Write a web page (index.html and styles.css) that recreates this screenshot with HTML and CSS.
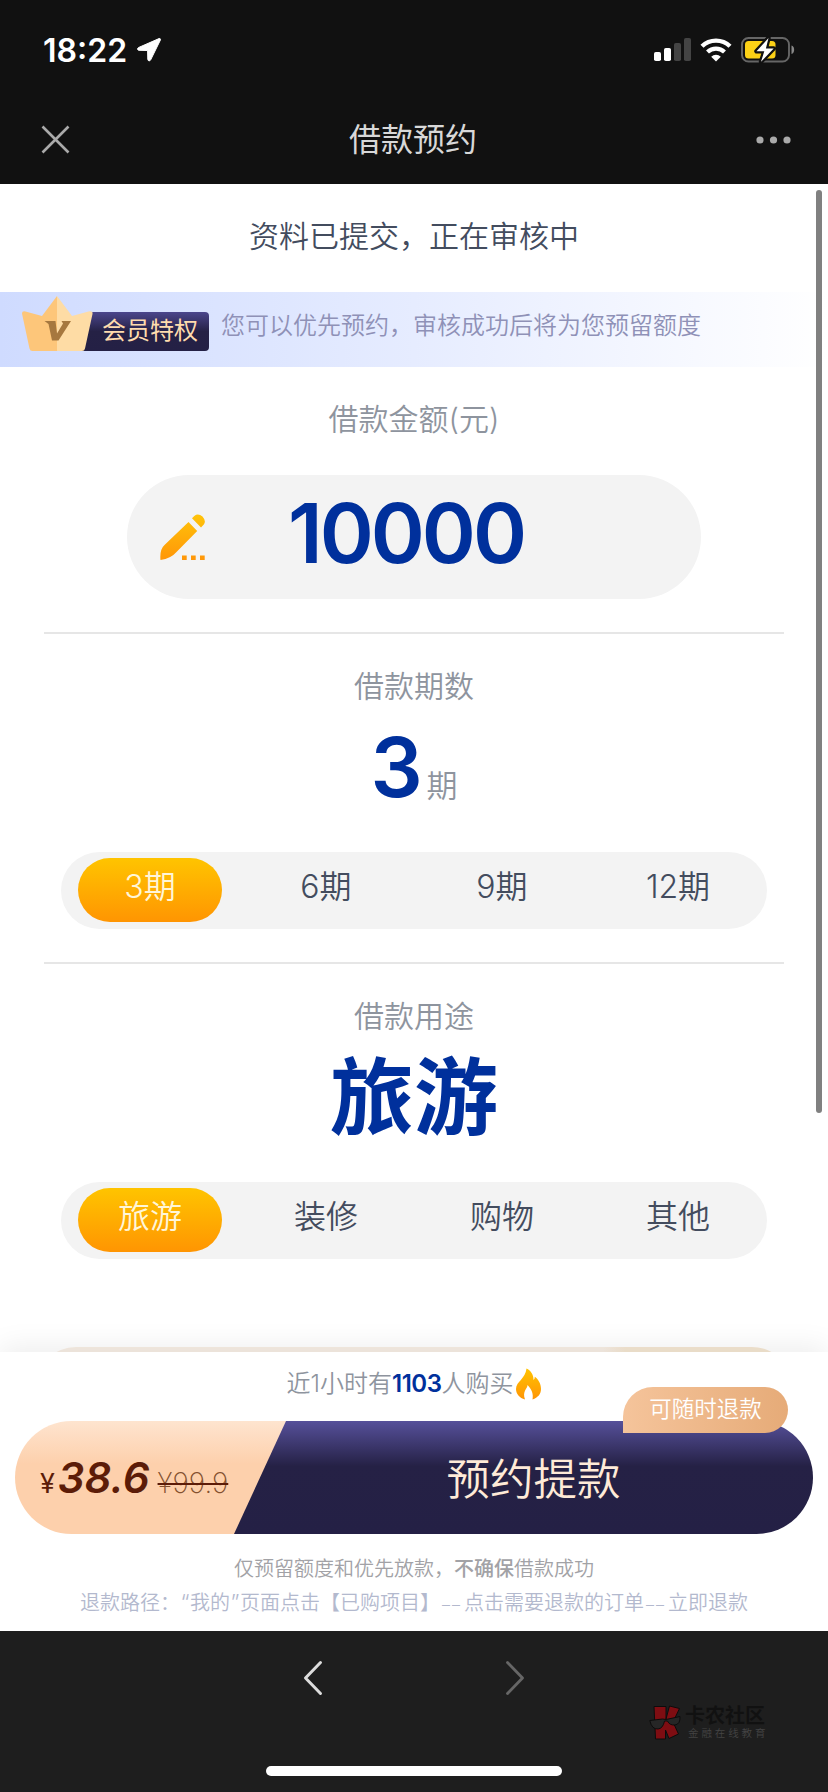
FILE: index.html
```html
<!DOCTYPE html>
<html lang="zh-CN">
<head>
<meta charset="utf-8">
<title>借款预约</title>
<link rel="stylesheet" href="styles.css">
</head>
<body>
<div class="phone">
  <header class="top">
    <div class="status">
      <div class="clock">
        <span>18:22</span>
        <svg width="26" height="26" viewBox="0 0 26 26"><path d="M23 1.600 2.600 10.500c-1.600.8-1.300 2.700.4 2.800l8.600.2.2 8.800c.1 1.800 2.100 2.200 2.900.5L24.400 3c.4-1-.4-1.800-1.400-1.400z" fill="#fff" stroke="#fff" stroke-width="1" stroke-linejoin="round"/></svg>
      </div>
      <div class="signals">
        <svg width="37" height="24" viewBox="0 0 37 24"><rect x="0" y="14" width="7" height="9" rx="1.800" fill="#fff"/><rect x="10" y="10" width="7" height="13" rx="1.800" fill="#fff"/><rect x="20" y="5" width="7" height="18" rx="1.800" fill="#444"/><rect x="30" y="0" width="7" height="23" rx="1.800" fill="#444"/></svg>
        <svg class="wifi" width="32" height="24" viewBox="0 0 32 24"><path d="M2 8.300a20 20 0 0 1 28 0" fill="none" stroke="#fff" stroke-width="4.400"/><path d="M7.500 14a12.200 12.200 0 0 1 17 0" fill="none" stroke="#fff" stroke-width="4.200"/><path d="M11.200 18.800a6.800 6.800 0 0 1 9.600 0L16 23.600z" fill="#fff"/></svg>
        <svg width="54" height="28" viewBox="0 0 54 28"><rect x="1" y="2" width="47" height="23.500" rx="6.500" fill="none" stroke="#666" stroke-width="1.900"/><rect x="4" y="5" width="30.500" height="17.500" rx="3.500" fill="#fcd116"/><path d="M50.500 9.500c3.500 1 3.500 7.500 0 8.500z" fill="#888"/><path d="M27.500 2 15.500 15.300h7.800L20 25.800l12.700-13.400h-7.800z" fill="#fff" stroke="#111" stroke-width="4.500" stroke-linejoin="round" paint-order="stroke"/></svg>
      </div>
    </div>
    <div class="nav">
      <svg width="29" height="29" viewBox="0 0 29 29"><path d="M1.500 1.500l26 26M27.500 1.500l-26 26" stroke="#aaa" stroke-width="2.600"/></svg>
      <h1 class="nav-title">借款预约</h1>
      <svg width="36" height="8" viewBox="0 0 36 8"><circle cx="4" cy="4" r="3.600" fill="#aaa"/><circle cx="17.500" cy="4" r="3.600" fill="#aaa"/><circle cx="31" cy="4" r="3.600" fill="#aaa"/></svg>
    </div>
  </header>

  <main class="content">
    <p class="notice">资料已提交，正在审核中</p>
    <div class="vip">
      <svg class="vip-badge" width="188" height="56" viewBox="0 0 188 56">
        <defs>
          <linearGradient id="navy" x1="0" y1="0" x2="0" y2="1"><stop offset="0" stop-color="#4b468c"/><stop offset=".5" stop-color="#252145"/><stop offset="1" stop-color="#242045"/></linearGradient>
        </defs>
        <path d="M66 16h117q4 0 4 4v31q0 4-4 4H60z" fill="url(#navy)"/>
        <path d="M35 0 20 20 3.500 15.400Q-.500 14.500.100 18L7.500 52.500Q8 55 10.500 55H35z" fill="#fdc67a"/>
        <path d="M35 0 50 20 66.500 15.400Q71.200 14.500 70.500 18L63 52.500Q62.500 55 60 55H35z" fill="#fedca5"/>
        <path d="M22.500 25H33.500L35 37.500 41 27.500 39.500 25H49L36.500 44.500H30L26.500 28z" fill="#a6783f"/>
      </svg>
      <span class="vip-label">会员特权</span>
      <p class="vip-text">您可以优先预约，审核成功后将为您预留额度</p>
    </div>

    <section class="block amount-block">
      <h2 class="label">借款金额(元)</h2>
      <div class="amount">
        <svg width="46" height="47" viewBox="0 0 46 47"><defs><linearGradient id="pen" x1="0" y1="0" x2="0" y2="46" gradientUnits="userSpaceOnUse"><stop offset="0" stop-color="#ffc40a"/><stop offset="1" stop-color="#ff9608"/></linearGradient></defs><path fill="url(#pen)" d="M32 4.200 34.300 2Q38-1 42.500 2.500 46.500 7 43.800 10.500L41 13.500zM28.500 8 37.200 17 16.500 38Q11 44.500.500 46-.500 35.500 4.500 31zM22 41.500h4.700v4.500H22zM31 41.500h4.700v4.500H31zM40 41.500h4.700v4.500H40z"/></svg>
        <strong class="amount-value">10000</strong>
      </div>
    </section>

    <section class="block choice-block">
      <h2 class="label">借款期数</h2>
      <div class="choice"><strong class="digit">3</strong><span class="unit">期</span></div>
      <div class="tabs"><span class="tab tab-on">3期</span><span class="tab">6期</span><span class="tab">9期</span><span class="tab">12期</span></div>
    </section>

    <section class="block choice-block">
      <h2 class="label">借款用途</h2>
      <div class="choice"><strong class="word">旅游</strong></div>
      <div class="tabs"><span class="tab tab-on">旅游</span><span class="tab">装修</span><span class="tab">购物</span><span class="tab">其他</span></div>
    </section>
    <div class="card-peek"></div>
    <div class="scrollbar"></div>
  </main>

  <section class="buy">
    <p class="recent">近1小时有<b>1103</b>人购买<svg width="25" height="32" viewBox="0 0 25 32"><defs><linearGradient id="fire" x1="0" y1="0" x2="0" y2="1"><stop offset="0" stop-color="#ffc300"/><stop offset="1" stop-color="#ff9505"/></linearGradient></defs><path fill="url(#fire)" d="M10.500.500c4 2 7.300 6 7 11.500q1.300-1 1.300-3.200C22.500 11.500 25 16 25 21c0 5-3 8.500-8.500 10.500 1-5.500-.500-9.500-5-14.500 0 4-5.500 6-2.500 14.500C3.500 30 0 26 0 21 0 13.500 9.500 11 10.500.500z"/></svg></p>
    <div class="cta">
      <div class="price"><span class="yen">¥</span><em class="now">38.6</em><s class="was">¥99.9</s></div>
      <div class="go">预约提款</div>
      <span class="tag">可随时退款</span>
    </div>
    <p class="fine">仅预留额度和优先放款，<b>不确保</b>借款成功</p>
    <p class="fine path">退款路径：<i class="quote">“</i>我的<i class="quote">”</i>页面点击【已购项目】<i class="dash">––</i>点击需要退款的订单<i class="dash">––</i>立即退款</p>
  </section>

  <footer class="browser">
    <div class="arrows">
      <svg width="20" height="36" viewBox="0 0 20 36"><path d="M17.500 2.500 2.500 18l15 15.500" fill="none" stroke="#ddd" stroke-width="3" stroke-linecap="round" stroke-linejoin="round"/></svg>
      <svg width="20" height="36" viewBox="0 0 20 36"><path d="M2.500 2.500 17.500 18l-15 15.500" fill="none" stroke="#666" stroke-width="2.800" stroke-linecap="round" stroke-linejoin="round"/></svg>
    </div>
    <div class="home-bar"></div>
    <div class="mark">
      <svg width="32" height="36" viewBox="0 0 32 36"><path d="M5 1.500H17V14L20.500 1l10 2.500L24 17l5.500 12-9.500 4.500L16.500 25V34H6.500z" fill="#7e0d12" stroke="#0c0c0c" stroke-width="1"/><path d="M.800 15.500 13.500 14l3.500.500 14-3q.500 7.500-5 8.500-5.500.500-7.500-4h-3q-1.500 7.500-6.500 8-6.200.500-8.200-8.500z" fill="#262626" stroke="#0c0c0c" stroke-width="1"/></svg>
      <div><div class="mark-name">卡农社区</div><div class="mark-sub">金融在线教育</div></div>
    </div>
  </footer>
</div>
</body>
</html>
```
FILE: styles.css
```css
* { box-sizing: border-box; }
body, h1, h2, p { margin: 0; }
body {
  width: 828px;
  height: 1792px;
  overflow: hidden;
  background: #fff;
  font-family: Inter, "Noto Sans CJK SC", sans-serif;
  font-weight: 350;
}
svg { display: block; flex: none; }
.phone { display: flex; flex-direction: column; height: 1792px; }
.phone > *, .content > * { flex: none; }

.top { height: 184px; background: #111; }
.status {
  display: flex;
  justify-content: space-between;
  align-items: center;
  height: 100px;
  padding: 0 33px 0 43px;
}
.clock { display: flex; align-items: center; gap: 9px; color: #fff; font-size: 32px; font-weight: 560; }
.signals { display: flex; align-items: center; gap: 9px; }
.nav {
  display: flex;
  justify-content: space-between;
  align-items: center;
  height: 79px;
  padding: 0 36px 0 41px;
}
.nav-title { font-size: 32px; line-height: 40px; font-weight: 400; color: #d8d8d8; }

.content { position: relative; display: flex; flex-direction: column; height: 1168px; overflow: hidden; }
.notice { height: 108px; text-align: center; font-size: 30px; line-height: 104px; color: #434c5e; }
.vip {
  display: flex;
  height: 75px;
  padding: 4px 0 0 22px;
  background: linear-gradient(90deg, #cfdbff, #e6ecff 50%, #fff);
}
.vip-label { width: 96px; margin-left: -108px; font-size: 24px; line-height: 69px; font-weight: 400; color: #ffdcae; white-space: nowrap; }
.vip-text { margin-left: 23px; font-size: 24px; line-height: 60px; color: #8f91b7; white-space: nowrap; }

.block { display: flex; flex-direction: column; align-items: center; width: 740px; margin: 0 auto; }
.label { font-size: 30px; line-height: 40px; font-weight: 350; color: #8e949e; }
.amount-block { height: 265px; padding-top: 32px; }
.amount {
  display: flex;
  align-items: center;
  width: 574px;
  height: 124px;
  margin-top: 36px;
  padding-left: 33px;
  border-radius: 62px;
  background: #f3f3f3;
}
.amount-value { margin: -6px 0 0 82px; font-size: 82px; line-height: 100px; font-weight: 560; letter-spacing: -3px; color: #00309c; }
.choice-block { height: 330px; padding-top: 32px; border-top: 2px solid #e6e6e6; }
.choice { display: flex; align-items: baseline; justify-content: center; gap: 4px; height: 128px; padding-top: 12px; color: #00309c; }
.digit { font-size: 82px; line-height: 100px; font-weight: 560; }
.unit { font-size: 31px; line-height: 40px; color: #8e949e; }
.word { font-size: 84px; line-height: 100px; font-weight: 600; }
.tabs {
  display: grid;
  grid-template-columns: repeat(4, 1fr);
  justify-items: center;
  width: 706px;
  height: 77px;
  margin-top: 18px;
  padding: 6px 1px;
  border-radius: 39px;
  background: #f3f3f3;
}
.tab { width: 144px; height: 64px; border-radius: 32px; text-align: center; font-size: 32px; line-height: 58px; color: #434c5e; }
.tab-on { background: linear-gradient(#ffc400, #ff9502); color: #fff6d8; }
.card-peek { width: 756px; height: 80px; margin: 55px auto 0; border-radius: 40px; background: linear-gradient(90deg, #f7eee4 75%, #f4e6d2 78%); }
.scrollbar { position: absolute; top: 6px; right: 6px; width: 6px; height: 923px; border-radius: 3px; background: #808080; }

.buy { position: relative; display: flex; flex-direction: column; height: 279px; padding: 15px 15px 0; background: #fff; box-shadow: 0 -4px 28px rgba(0, 0, 0, .08); }
.recent { display: flex; align-items: center; justify-content: center; height: 34px; font-size: 24px; line-height: 28px; color: #8e949e; }
.recent b { font-weight: 600; letter-spacing: -.5px; color: #00309c; }
.recent svg { margin-left: 3px; }
.cta { position: relative; display: flex; height: 113px; margin-top: 20px; }
.price {
  position: relative;
  display: flex;
  align-items: baseline;
  width: 271px;
  padding: 29px 0 0 25px;
  border-radius: 57px 0 0 57px;
  background: linear-gradient(#fee4cf, #fdd0ac 38%);
  clip-path: polygon(0 0, 100% 0, 219px 100%, 0 100%);
  color: #5c1c08;
  z-index: 1;
}
.yen { font-size: 27px; font-weight: 400; }
.now { margin-left: 3px; font-size: 42px; line-height: 56px; font-weight: 560; }
.was { margin-left: 8px; font-size: 28px; font-weight: 200; color: #84502f; text-decoration: line-through 2px #5c1c08; }
.go {
  flex: 1;
  margin-left: -60px;
  padding: 2px 32px 0 60px;
  border-radius: 0 57px 57px 0;
  background: linear-gradient(#56509a, #252145 40%, #242045);
  text-align: center;
  font-size: 43.500px;
  line-height: 113px;
  color: #ffebd8;
}
.tag {
  position: absolute;
  top: -34px;
  right: 25px;
  width: 165px;
  height: 46px;
  border-radius: 30px 23px 23px 0;
  background: linear-gradient(90deg, #f5c49b, #e6ab78);
  text-align: center;
  font-size: 22.500px;
  line-height: 44px;
  color: #fff;
  z-index: 2;
}
.fine { margin-top: 19px; text-align: center; font-size: 20px; line-height: 33px; color: #a2a2a6; white-space: nowrap; }
.fine b { font-weight: 500; }
.path { margin-top: 1px; color: #b3b9ce; }
.quote { display: inline-block; width: 10px; font-style: normal; font-size: 22px; line-height: 20px; }
.dash { display: inline-block; width: 24px; font-style: normal; font-size: 16px; line-height: 20px; letter-spacing: 2px; }

.browser { position: relative; height: 161px; background: #1e1e1e; }
.arrows { display: flex; justify-content: center; gap: 182px; padding: 29px 0 0; }
.home-bar { position: absolute; left: 266px; bottom: 16px; width: 296px; height: 10px; border-radius: 5px; background: #fff; }
.mark { position: absolute; left: 649px; top: 74px; display: flex; gap: 4px; }
.mark-name { font-size: 20px; line-height: 22px; font-weight: 700; color: #111; }
.mark-sub { padding-left: 3px; font-size: 10.500px; line-height: 13px; letter-spacing: 2.900px; color: #444; }
```
